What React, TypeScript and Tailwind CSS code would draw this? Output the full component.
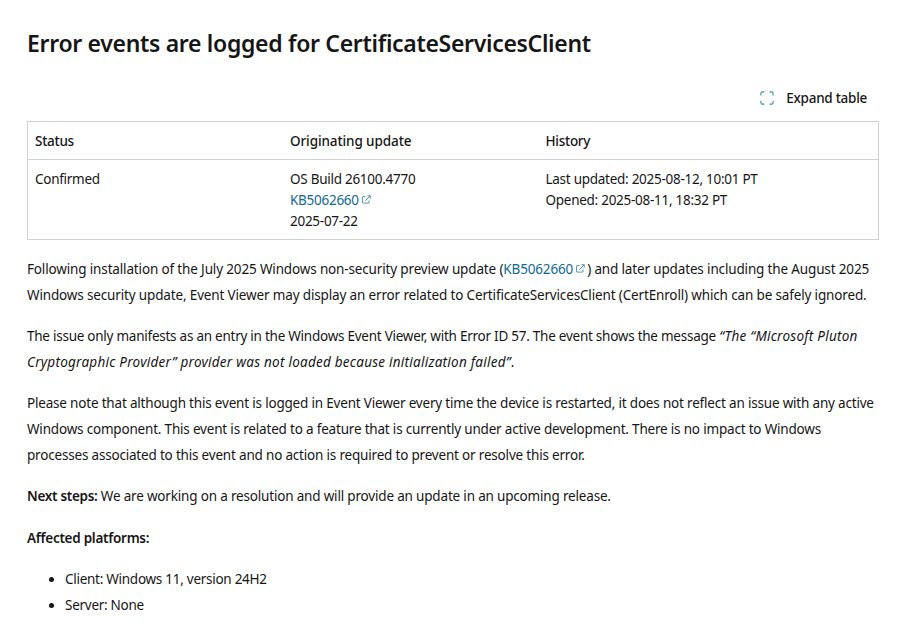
function ExternalIcon() {
  return (
    <svg viewBox="0 0 10 10" className="inline-block w-[9px] h-[9px] ml-[3px] mr-[2px] align-[1px]" fill="none" stroke="#0f6a8f" strokeWidth="0.8">
      <path d="M4 1.8H1.2a.6.6 0 0 0-.6.6v6a.6.6 0 0 0 .6.6h6a.6.6 0 0 0 .6-.6V6" />
      <path d="M3.6 6.4 9 1M6 .8h3.2V4" />
    </svg>
  )
}

function ExpandIcon() {
  return (
    <svg viewBox="0 0 16 16" className="w-[14px] h-[14px]" fill="none" stroke="#2f8f9d" strokeWidth="1.2">
      <path d="M1 5V3a2 2 0 0 1 2-2h2" />
      <path d="M11 1h2a2 2 0 0 1 2 2v2" />
      <path d="M1 11v2a2 2 0 0 0 2 2h2" />
      <path d="M11 15h2a2 2 0 0 0 2-2v-2" />
    </svg>
  )
}

function KbLink() {
  return (
    <a className="text-[#0f6a8f]">
      KB5062660
      <ExternalIcon />
    </a>
  )
}

export default function App() {
  return (
    <div className="bg-white text-[#161616] text-[13.5px] leading-[26px] tracking-[-0.27px] pl-[27px] pr-[31px] pt-[24px] font-['Noto_Sans',sans-serif]">
      <h1 className="text-[23px] leading-[38px] font-semibold tracking-[-0.32px]">
        Error events are logged for CertificateServicesClient
      </h1>

      <div className="flex justify-end items-center gap-[12px] pr-[12px] mt-[20px] mb-[7px] h-[32px]">
        <ExpandIcon />
        <span className="font-medium">Expand table</span>
      </div>

      <div className="border border-[#d1d1d1] leading-[21px]">
        <div className="grid grid-cols-[255px_255.500px_1fr] border-b border-[#d1d1d1] h-[38px] pt-[2px] items-center font-medium">
          <div className="pl-[7px]">Status</div>
          <div className="pl-[7px] tracking-[-0.1px]">Originating update</div>
          <div className="pl-[7px]">History</div>
        </div>
        <div className="grid grid-cols-[255px_255.500px_1fr] pt-[9px] pb-[7px]">
          <div className="pl-[7px]">Confirmed</div>
          <div className="pl-[7px]">
            <div>OS Build 26100.4770</div>
            <div><KbLink /></div>
            <div>2025-07-22</div>
          </div>
          <div className="pl-[7px]">
            <div>Last updated: 2025-08-12, 10:01 PT</div>
            <div>Opened: 2025-08-11, 18:32 PT</div>
          </div>
        </div>
      </div>

      <p className="mt-[16px] tracking-[-0.15px]">
        Following installation of the July 2025 Windows non-security preview update (<KbLink />) and later updates including the August 2025 Windows security update, Event Viewer may display an error related to CertificateServicesClient (CertEnroll) which can be safely ignored.
      </p>
      <p className="mt-[15px] tracking-[-0.25px]">
        The issue only manifests as an entry in the Windows Event Viewer, with Error ID 57. The event shows the message <em className="tracking-[0.25px]">“The “Microsoft Pluton Cryptographic Provider” provider was not loaded because initialization failed”</em>.
      </p>
      <p className="mt-[15px] tracking-[-0.19px]">
        Please note that although this event is logged in Event Viewer every time the device is restarted, it does not reflect an issue with any active Windows component. This event is related to a feature that is currently under active development. There is no impact to Windows processes associated to this event and no action is required to prevent or resolve this error.
      </p>
      <p className="mt-[15px] tracking-[-0.18px]">
        <span className="font-semibold tracking-[-0.3px]">Next steps:</span> We are working on a resolution and will provide an update in an upcoming release.
      </p>
      <p className="mt-[16px] font-semibold">Affected platforms:</p>
      <ul className="list-disc pl-[38px] mt-[15px]">
        <li>Client: Windows 11, version 24H2</li>
        <li>Server: None</li>
      </ul>
    </div>
  )
}
